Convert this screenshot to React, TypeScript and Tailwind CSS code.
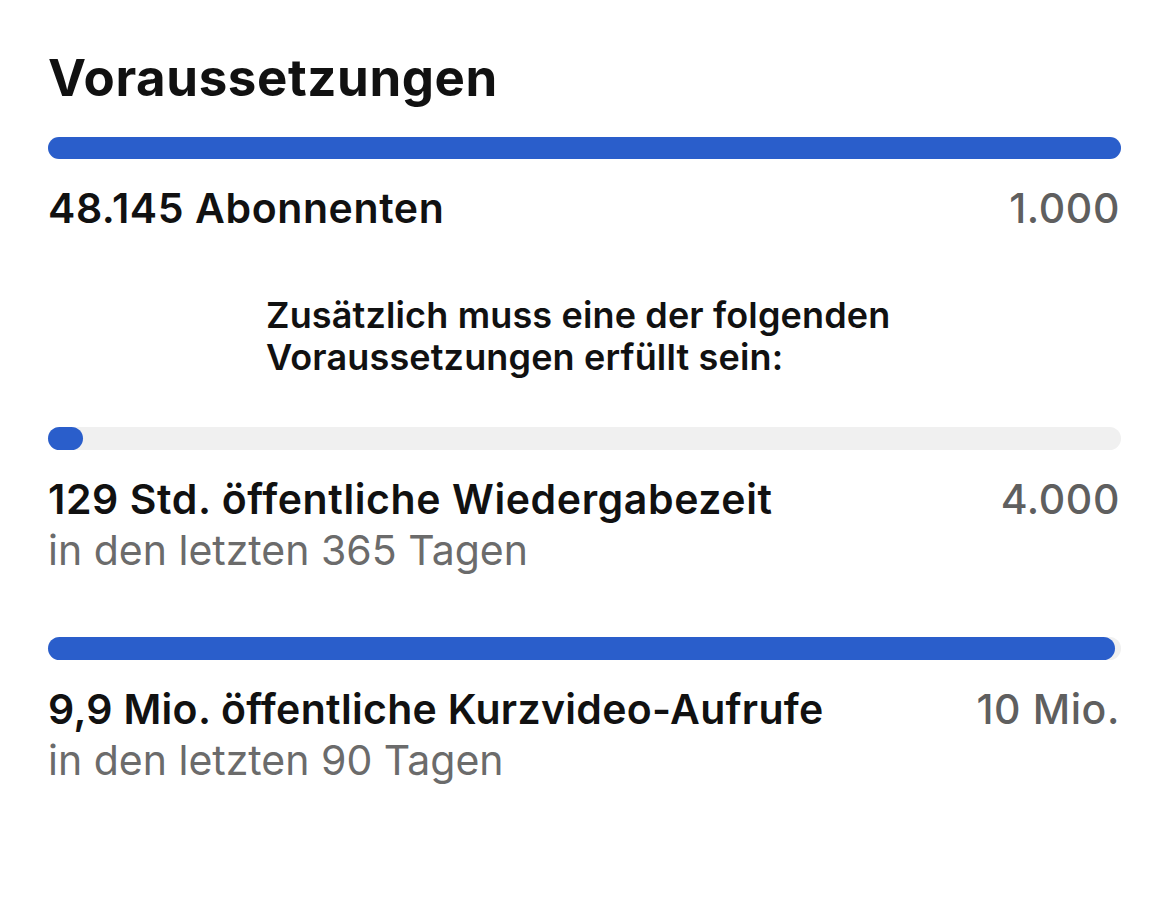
export default function App() {
  const font = { fontFamily: 'Inter, "Noto Sans", sans-serif' };
  return (
    <div className="w-[1170px] h-[899px] bg-white px-[48px] pt-[48px]" style={font}>
      <h1 className="text-[51px] leading-[60px] font-bold text-[#111] tracking-[0.6px]">Voraussetzungen</h1>
      <div className="mt-[29px] h-[22px] rounded-full bg-[#f0f0f0] w-[1073px]">
        <div className="h-full rounded-full bg-[#2a5ecb] w-full" />
      </div>
      <div className="mt-[24px] flex justify-between items-baseline text-[41px] leading-[50px] font-semibold tracking-[0.6px]">
        <span className="text-[#111]">48.145 Abonnenten</span>
        <span className="text-[#5f5f5f] font-medium pr-[2px]">1.000</span>
      </div>
      <div className="mt-[61px] pl-[218px] text-[36px] leading-[42px] font-semibold text-[#111] tracking-[0.15px]">
        <p>Zusätzlich muss eine der folgenden</p>
        <p>Voraussetzungen erfüllt sein:</p>
      </div>
      <div className="mt-[49px] h-[23px] rounded-full bg-[#f0f0f0] w-[1073px]">
        <div className="h-full rounded-full bg-[#2a5ecb] w-[35px]" />
      </div>
      <div className="mt-[24px] flex justify-between items-baseline text-[41px] leading-[50px] font-semibold tracking-[0.6px]">
        <span className="text-[#111]">129 Std. öffentliche Wiedergabezeit</span>
        <span className="text-[#5f5f5f] font-medium pr-[2px]">4.000</span>
      </div>
      <div className="mt-[1px] text-[41px] leading-[50px] text-[#6b6b6b]">in den letzten 365 Tagen</div>
      <div className="mt-[62px] h-[23px] rounded-full bg-[#f0f0f0] w-[1073px]">
        <div className="h-full rounded-full bg-[#2a5ecb] w-[1067px]" />
      </div>
      <div className="mt-[24px] flex justify-between items-baseline text-[41px] leading-[50px] font-semibold">
        <span className="text-[#111] tracking-[0.3px]">9,9 Mio. öffentliche Kurzvideo-Aufrufe</span>
        <span className="text-[#5f5f5f] font-medium pr-[2px] tracking-[0.6px]">10 Mio.</span>
      </div>
      <div className="mt-[1px] text-[41px] leading-[50px] text-[#6b6b6b]">in den letzten 90 Tagen</div>
    </div>
  );
}
